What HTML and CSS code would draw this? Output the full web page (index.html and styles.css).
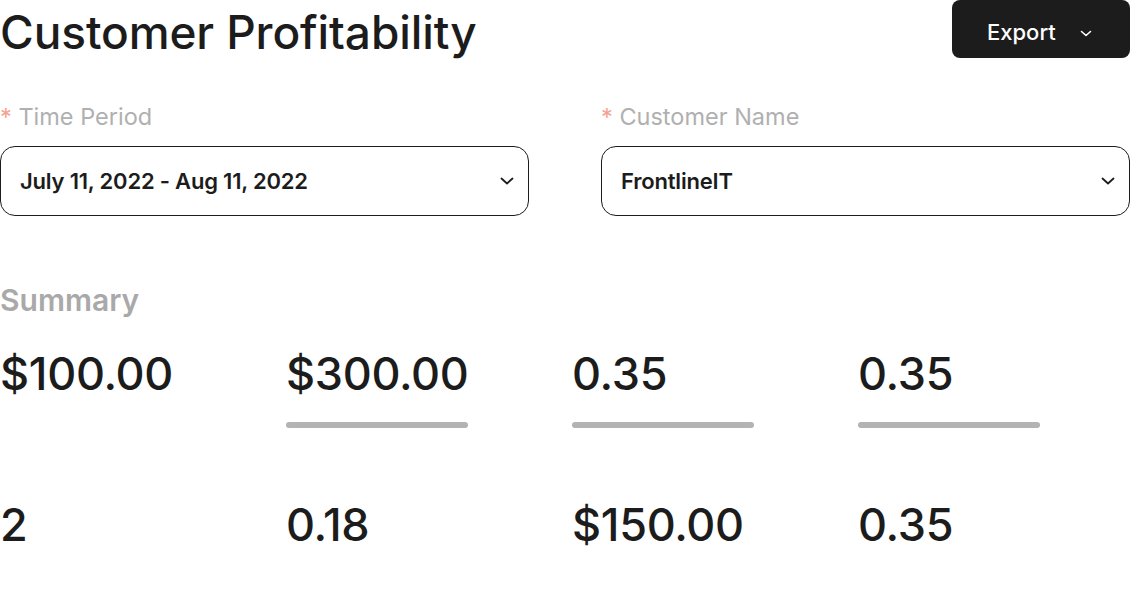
FILE: index.html
```html
<!DOCTYPE html>
<html lang="en">
<head>
<meta charset="utf-8">
<title>Customer Profitability</title>
<link rel="stylesheet" href="styles.css">
</head>
<body>
<div class="page">
  <header class="header">
    <h1 class="title">Customer Profitability</h1>
    <button class="export">
      <span>Export</span>
      <svg class="export-chev" width="12" height="7" viewBox="0 0 12 7"><path d="M1.5 1.5 L6 5.5 L10.5 1.5" fill="none" stroke="#fff" stroke-width="1.6" stroke-linecap="round" stroke-linejoin="round"/></svg>
    </button>
  </header>

  <section class="filters">
    <div class="field">
      <div class="label"><span class="req">*</span> Time Period</div>
      <div class="select">
        <span class="select-value">July 11, 2022 - Aug 11, 2022</span>
        <svg class="chev" width="14" height="8" viewBox="0 0 14 8"><path d="M1.5 1.5 L7 6.5 L12.5 1.5" fill="none" stroke="#1c1c1c" stroke-width="1.8" stroke-linecap="round" stroke-linejoin="round"/></svg>
      </div>
    </div>
    <div class="field">
      <div class="label"><span class="req">*</span> Customer Name</div>
      <div class="select">
        <span class="select-value">FrontlineIT</span>
        <svg class="chev" width="14" height="8" viewBox="0 0 14 8"><path d="M1.5 1.5 L7 6.5 L12.5 1.5" fill="none" stroke="#1c1c1c" stroke-width="1.8" stroke-linecap="round" stroke-linejoin="round"/></svg>
      </div>
    </div>
  </section>

  <section class="summary">
    <h2 class="summary-title">Summary</h2>
    <div class="stats">
      <div class="stat"><div class="value">$100.00</div></div>
      <div class="stat"><div class="value">$300.00</div><div class="bar"></div></div>
      <div class="stat"><div class="value">0.35</div><div class="bar"></div></div>
      <div class="stat"><div class="value">0.35</div><div class="bar"></div></div>
      <div class="stat"><div class="value">2</div></div>
      <div class="stat"><div class="value">0.18</div></div>
      <div class="stat"><div class="value">$150.00</div></div>
      <div class="stat"><div class="value">0.35</div></div>
    </div>
  </section>
</div>
</body>
</html>
```

FILE: styles.css
```css
* { box-sizing: border-box; }
html, body { margin: 0; padding: 0; background: #fff; }
body {
  font-family: Inter, "Noto Sans", sans-serif;
  color: #1c1c1c;
  overflow: hidden;
}
.page { width: 1130px; }

.header {
  display: flex;
  justify-content: space-between;
  align-items: flex-start;
  height: 58px;
}
.title {
  margin: 0;
  font-size: 46px;
  font-weight: 500;
  line-height: 64px;
  letter-spacing: -0.1px;
}
.export {
  width: 178px;
  height: 58px;
  background: #1c1c1c;
  border: none;
  border-radius: 8px;
  color: #fff;
  font-family: inherit;
  font-size: 22px;
  font-weight: 500;
  display: flex;
  align-items: center;
  padding: 5px 0 0 35px;
  gap: 24px;
}
.export-chev { margin-top: 3px; }

.filters {
  display: grid;
  grid-template-columns: 1fr 1fr;
  column-gap: 72px;
  margin-top: 44px;
}
.label {
  font-size: 23.5px;
  line-height: 30px;
  color: #b0b0b0;
}
.req { color: #f4a28f; }
.select {
  margin-top: 14px;
  height: 70px;
  border: 1.5px solid #1c1c1c;
  border-radius: 15px;
  display: flex;
  align-items: center;
  justify-content: space-between;
  padding: 0 14px 0 19px;
}
.select-value {
  font-size: 22px;
  font-weight: 600;
  letter-spacing: -0.2px;
}

.summary { margin-top: 66px; }
.summary-title {
  margin: 0;
  font-size: 30px;
  font-weight: 600;
  line-height: 36px;
  color: #a9a9a9;
}
.stats {
  display: grid;
  grid-template-columns: repeat(4, 182px);
  column-gap: 104px;
  row-gap: 69px;
  margin-top: 28px;
}
.value {
  font-size: 45px;
  font-weight: 500;
  line-height: 56px;
  letter-spacing: -0.3px;
}
.bar {
  margin-top: 20px;
  height: 6px;
  border-radius: 3px;
  background: #b3b3b3;
}
```
